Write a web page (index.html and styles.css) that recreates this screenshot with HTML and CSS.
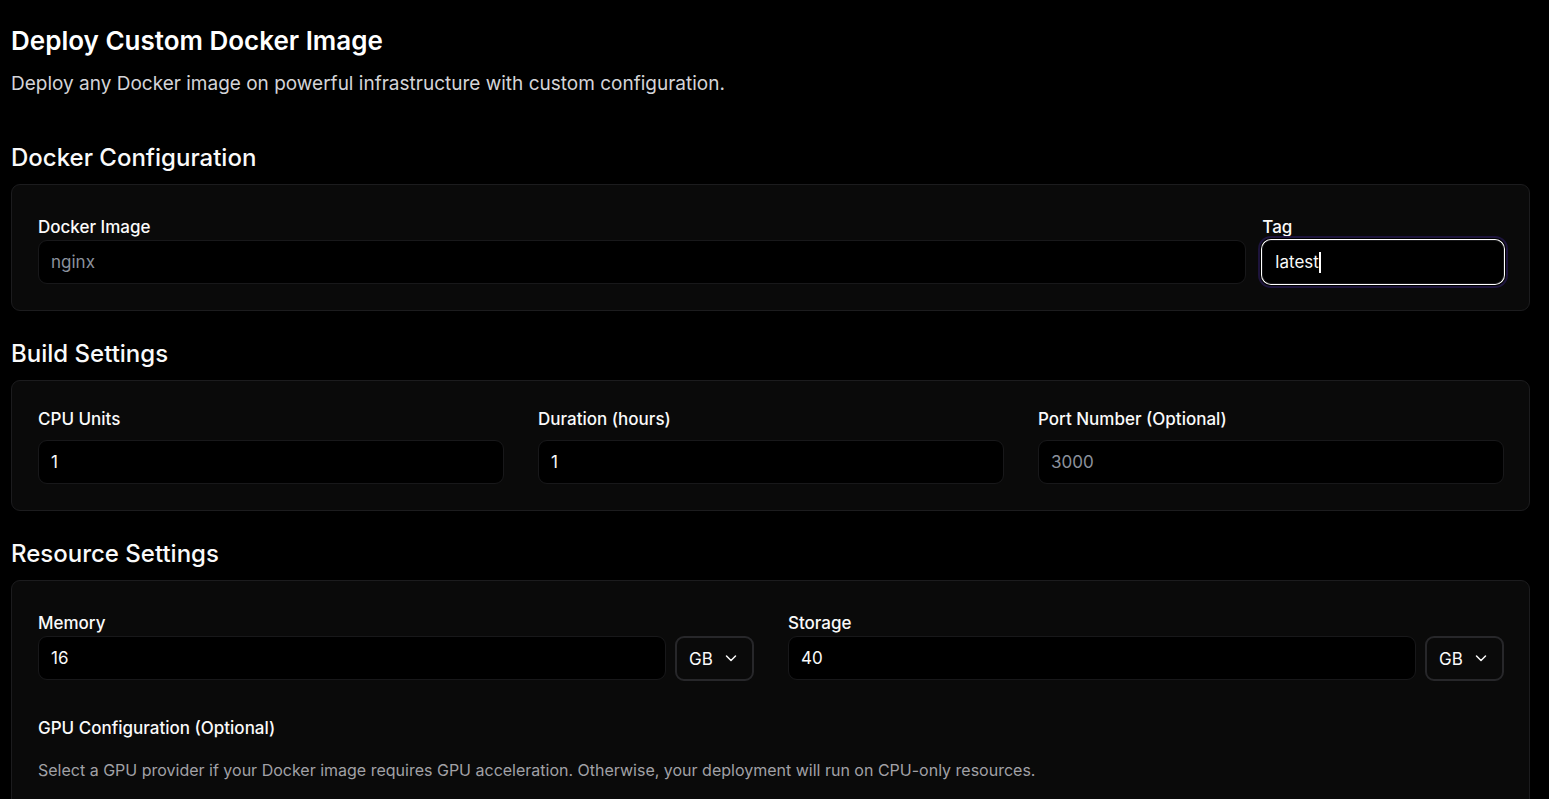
FILE: index.html
```html
<!DOCTYPE html>
<html lang="en">
<head>
<meta charset="utf-8">
<meta name="viewport" content="width=device-width, initial-scale=1">
<title>Deploy Custom Docker Image</title>
<link rel="stylesheet" href="styles.css">
</head>
<body>
<main class="page">
  <header class="page-header">
    <h1 class="title">Deploy Custom Docker Image</h1>
    <p class="subtitle">Deploy any Docker image on powerful infrastructure with custom configuration.</p>
  </header>
  <form class="form">
    <section class="section">
      <h2 class="section-title">Docker Configuration</h2>
      <div class="card grid-image">
        <div class="field">
          <label class="label" for="image">Docker Image</label>
          <input class="input" id="image" type="text" placeholder="nginx">
        </div>
        <div class="field">
          <label class="label" for="tag">Tag</label>
          <div class="input-wrap">
            <input class="input input-active" id="tag" type="text" value="latest">
            <span class="caret" aria-hidden="true"></span>
          </div>
        </div>
      </div>
    </section>
    <section class="section">
      <h2 class="section-title">Build Settings</h2>
      <div class="card grid-build">
        <div class="field field-spaced">
          <label class="label" for="cpu">CPU Units</label>
          <input class="input" id="cpu" type="text" inputmode="numeric" value="1">
        </div>
        <div class="field field-spaced">
          <label class="label" for="duration">Duration (hours)</label>
          <input class="input" id="duration" type="text" inputmode="numeric" value="1">
        </div>
        <div class="field field-spaced">
          <label class="label" for="port">Port Number (Optional)</label>
          <input class="input" id="port" type="text" inputmode="numeric" placeholder="3000">
        </div>
      </div>
    </section>
    <section class="section">
      <h2 class="section-title">Resource Settings</h2>
      <div class="card">
        <div class="grid-resources">
          <div class="field">
            <label class="label" for="memory">Memory</label>
            <div class="amount">
              <input class="input" id="memory" type="text" inputmode="numeric" value="16">
              <div class="select-wrap">
                <select class="select" aria-label="Memory unit"><option>GB</option><option>MB</option></select>
                <svg class="chevron" viewBox="0 0 16 16" aria-hidden="true"><path d="M3.5 6 8 10.5 12.5 6"/></svg>
              </div>
            </div>
          </div>
          <div class="field">
            <label class="label" for="storage">Storage</label>
            <div class="amount">
              <input class="input" id="storage" type="text" inputmode="numeric" value="40">
              <div class="select-wrap">
                <select class="select" aria-label="Storage unit"><option>GB</option><option>MB</option></select>
                <svg class="chevron" viewBox="0 0 16 16" aria-hidden="true"><path d="M3.5 6 8 10.5 12.5 6"/></svg>
              </div>
            </div>
          </div>
        </div>
        <div class="gpu">
          <h3 class="gpu-title">GPU Configuration (Optional)</h3>
          <p class="gpu-text">Select a GPU provider if your Docker image requires GPU acceleration. Otherwise, your deployment will run on CPU-only resources.</p>
        </div>
      </div>
    </section>
  </form>
</main>
</body>
</html>
```
FILE: styles.css
```css
* { box-sizing: border-box; }

html { overflow: hidden; background: #000; }

body {
  margin: 0;
  background: #000;
  color: #fafafa;
  font-family: Inter, "Liberation Sans", sans-serif;
  font-size: 17px;
}

h1, h2, h3, p { margin: 0; }

.page { padding: 23px 19px 32px 11px; }

.title { font-size: 26px; line-height: 36px; font-weight: 600; color: #fff; }

.subtitle { margin-top: 10px; font-size: 19px; line-height: 30px; color: #d4d4d8; }

.form { display: grid; gap: 26px; margin-top: 42px; }

.section-title {
  margin-bottom: 9px;
  font-size: 24px;
  line-height: 34px;
  font-weight: 500;
}

.card {
  padding: 26px 25px 26px 26px;
  border: 1px solid #1c1c1e;
  border-radius: 9px;
  background: #0a0a0a;
}

.grid-image { display: grid; grid-template-columns: 5fr 1fr; gap: 16px; }
.grid-build { display: grid; grid-template-columns: repeat(3, 1fr); gap: 34px; }
.grid-resources { display: grid; grid-template-columns: repeat(2, 1fr); gap: 34px; }

.field { display: flex; flex-direction: column; min-width: 0; }
.label { padding-top: 3px; font-size: 17px; line-height: 26px; font-weight: 500; }
.field-spaced { gap: 9px; }
.field-spaced .label { padding-top: 0; line-height: 24px; }

.input {
  width: 100%;
  min-width: 0;
  height: 44px;
  padding: 0 12px;
  border: 1px solid #18181a;
  border-radius: 9px;
  outline: 0;
  background: #000;
  color: #fafafa;
  font: inherit;
}

.input::placeholder { color: #8b919c; opacity: 1; }

.input-wrap { position: relative; }

.input-active {
  box-shadow: 0 0 0 1px #fff, 0 0 0 2px #000, 0 0 0 4px #1d143c;
}

.caret {
  position: absolute;
  top: 12px;
  left: 57px;
  width: 2px;
  height: 21px;
  background: #fff;
}

.amount { display: flex; gap: 9px; }
.amount .input { flex: 1; }

.select-wrap { position: relative; flex: none; }

.select {
  width: 79px;
  height: 45px;
  padding: 0 12px;
  border: 2px solid #27272a;
  border-radius: 9px;
  appearance: none;
  background: #0a0a0a;
  color: #fafafa;
  font: inherit;
}

.chevron {
  position: absolute;
  top: 14px;
  right: 15px;
  width: 16px;
  height: 16px;
  fill: none;
  stroke: #fafafa;
  stroke-width: 1.5;
  stroke-linecap: round;
  stroke-linejoin: round;
  pointer-events: none;
}

.gpu { margin-top: 34px; }
.gpu-title { font-size: 17px; line-height: 26px; font-weight: 500; }
.gpu-text { margin-top: 16px; font-size: 16px; line-height: 26px; color: #a1a1a6; }
```
